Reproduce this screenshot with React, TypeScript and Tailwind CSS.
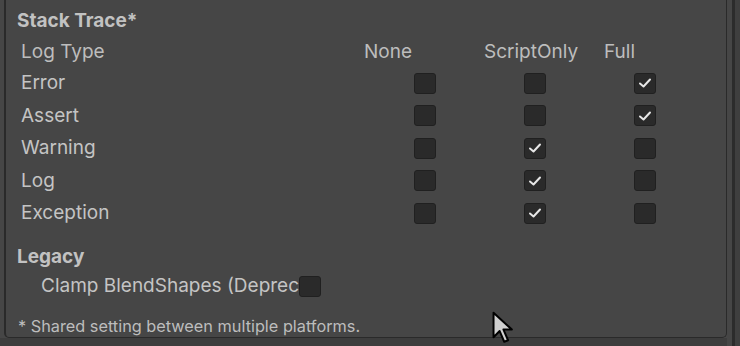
import React from 'react';

type Level = 'none' | 'script' | 'full';

const rows: { name: string; level: Level }[] = [
  { name: 'Error', level: 'full' },
  { name: 'Assert', level: 'full' },
  { name: 'Warning', level: 'script' },
  { name: 'Log', level: 'script' },
  { name: 'Exception', level: 'script' },
];

const Check = ({ on }: { on: boolean }) => (
  <div className="w-[22px] h-[21px] shrink-0 rounded-[3px] bg-[#2a2a2a] border border-[#202020] flex items-center justify-center">
    {on && (
      <svg width="14" height="12" viewBox="0 0 14 12">
        <path d="M2 6.5 L5.5 9.5 L12 2.5" fill="none" stroke="#e6e6e6" strokeWidth="2" strokeLinecap="round" strokeLinejoin="round" />
      </svg>
    )}
  </div>
);

const App = () => {
  return (
    <div
      className="relative w-[740px] h-[346px] bg-[#464646] flex overflow-hidden text-[#c4c4c4]"
      style={{ fontFamily: 'Inter, "Noto Sans", sans-serif' }}
    >
      <div className="w-[4px] shrink-0" />
      {/* panel */}
      <div className="w-[723px] h-[338px] shrink-0 border-l-2 border-r border-b border-[#2a2a2a] rounded-bl-[5px] rounded-br-[5px] flex flex-col">
        <div className="pl-[11px] pt-[9px] h-[37px] text-[19px] leading-[24px] font-bold text-[#c2c2c2]">Stack Trace*</div>

        {/* header */}
        <div className="flex items-center h-[30px] pl-[15px] text-[19px] text-[#bdbdbd]">
          <span className="w-[343px] shrink-0">Log Type</span>
          <span className="w-[120px] shrink-0">None</span>
          <span className="w-[120px] shrink-0">ScriptOnly</span>
          <span>Full</span>
        </div>

        {rows.map((r) => (
          <div key={r.name} className="flex items-center h-[32.5px] pl-[15px] text-[19px] text-[#c4c4c4]">
            <span className="w-[393px] shrink-0">{r.name}</span>
            <div className="w-[110px] shrink-0"><Check on={r.level === 'none'} /></div>
            <div className="w-[110px] shrink-0"><Check on={r.level === 'script'} /></div>
            <div className="w-[80px] shrink-0"><Check on={r.level === 'full'} /></div>
          </div>
        ))}

        <div className="pl-[11px] pt-[15px] h-[44px] text-[19px] leading-[24px] font-bold text-[#c2c2c2]">Legacy</div>
        <div className="flex items-center h-[26px] pl-[35px] text-[19px] text-[#c4c4c4]">
          <span className="w-[258px] shrink-0 overflow-hidden whitespace-nowrap">Clamp BlendShapes (Deprec</span>
          <Check on={false} />
        </div>
        <div className="pl-[12px] pt-[16px] text-[16.3px] leading-[20px] text-[#bdbdbd]">* Shared setting between multiple platforms.</div>
      </div>

      {/* right gutter */}
      <div className="flex-1 flex">
        <div className="w-[5px]" />
        <div className="w-[3px] h-full bg-[#2c2c2c]" />
        <div className="flex-1 bg-[#3f3f3f]" />
      </div>

      {/* bottom strip */}
      <div className="absolute left-0 bottom-0 w-[727px] h-[8px] bg-[#3d3d3d]" />

      {/* mouse cursor */}
      <svg className="absolute left-[492px] top-[311px]" width="26" height="34" viewBox="0 0 17 22">
        <path d="M1 1 L1 17 L5 13 L8 20 L10.5 19 L7.5 12 L13 12 Z" fill="#cfcfcf" stroke="#000" strokeWidth="1.3" strokeLinejoin="round" />
      </svg>
    </div>
  );
};

export default App;
